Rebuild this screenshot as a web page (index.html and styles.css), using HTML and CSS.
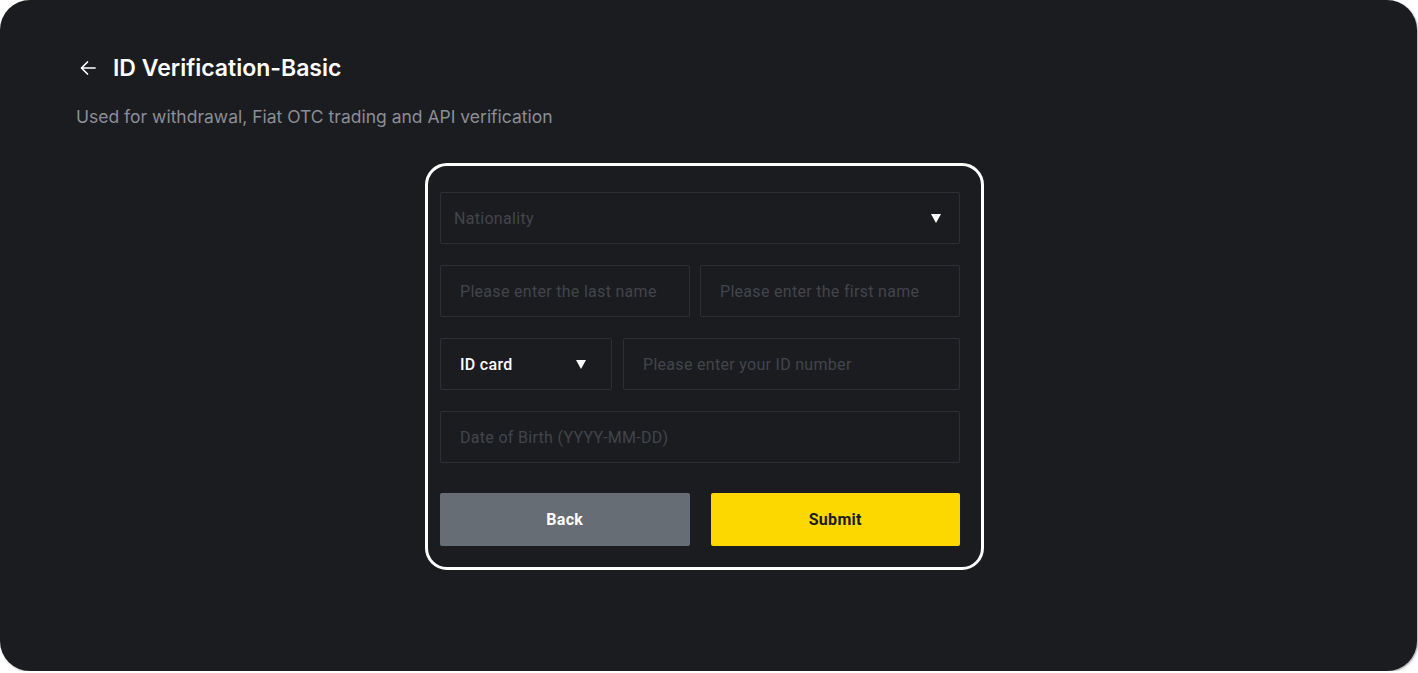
FILE: index.html
```html
<!DOCTYPE html>
<html>
<head>
    <title>ID Verification-Basic</title>
    <meta name="viewport" content="width=device-width, initial-scale=1.0">
    <link rel="stylesheet" href="styles.css">
</head>
<body>
    <div class="panel">
        <div class="title-row">
            <svg class="back-arrow" width="20" height="20" viewBox="0 0 20 20">
                <path d="M17 10H3.5M9.5 4L3.5 10l6 6" fill="none" stroke="#fff" stroke-width="1.7" stroke-linecap="round" stroke-linejoin="round"/>
            </svg>
            <h1>ID Verification-Basic</h1>
        </div>
        <p class="subtitle">Used for withdrawal, Fiat OTC trading and API verification</p>

        <form class="card">
            <div class="field select nationality">
                <span class="placeholder">Nationality</span>
                <span class="caret"></span>
            </div>

            <div class="row">
                <div class="field last-name"><span class="placeholder">Please enter the last name</span></div>
                <div class="field"><span class="placeholder">Please enter the first name</span></div>
            </div>

            <div class="row id-row">
                <div class="field select id-type">
                    <span class="value">ID card</span>
                    <span class="caret"></span>
                </div>
                <div class="field"><span class="placeholder">Please enter your ID number</span></div>
            </div>

            <div class="field"><span class="placeholder">Date of Birth (YYYY-MM-DD)</span></div>

            <div class="buttons">
                <button type="button" class="btn back">Back</button>
                <button type="button" class="btn submit">Submit</button>
            </div>
        </form>
    </div>
</body>
</html>
```

FILE: styles.css
```css
body {
    margin: 0;
    background-color: #ffffff;
    font-family: Inter, "Liberation Sans", sans-serif;
}

.panel {
    width: 1417px;
    height: 671px;
    box-sizing: border-box;
    padding: 54px 76px 0 76px;
    background-color: #1b1c20;
    border-radius: 30px;
    box-shadow: 1px 1px 2px rgba(0,0,0,0.35);
}

.title-row {
    display: flex;
    align-items: center;
    height: 28px;
}

.back-arrow {
    margin-left: 2px;
    margin-right: 15px;
}

h1 {
    margin: 0;
    font-size: 23px;
    font-weight: 600;
    color: #ffffff;
}

.subtitle {
    margin: 23px 0 0 0;
    font-size: 17.5px;
    line-height: 24px;
    color: #8b8e95;
}

.card {
    width: 520px;
    margin: 34px 0 0 349px;
    padding: 26px 21px 21px 12px;
    border: 3px solid #ffffff;
    border-radius: 22px;
    display: flex;
    flex-direction: column;
    gap: 21px;
}

.row {
    display: flex;
    gap: 10px;
}

.row .field {
    flex: 1;
}

.row .last-name {
    flex: 0 0 250px;
}

.id-row {
    gap: 11px;
}

.id-row .id-type {
    flex: 0 0 172px;
}

.field {
    height: 52px;
    box-sizing: border-box;
    border: 1px solid #2d2f35;
    border-radius: 2px;
    padding: 0 19px;
    display: flex;
    align-items: center;
    font-family: Roboto, "Liberation Sans", sans-serif;
    font-size: 16px;
    letter-spacing: 0.3px;
}

.nationality {
    padding-left: 13px;
}

.select {
    justify-content: space-between;
    padding-right: 18px;
}

.id-type {
    padding-right: 25px;
}

.placeholder {
    color: #42454b;
}

.value {
    color: #ffffff;
    font-weight: 500;
}

.caret {
    width: 0;
    height: 0;
    border-left: 5px solid transparent;
    border-right: 5px solid transparent;
    border-top: 9px solid #ffffff;
}

.buttons {
    display: flex;
    gap: 21px;
    margin-top: 9px;
}

.btn {
    flex: 1;
    height: 53px;
    border: none;
    border-radius: 2px;
    font-family: Roboto, "Liberation Sans", sans-serif;
    font-size: 16px;
    font-weight: 700;
    letter-spacing: 0.3px;
    cursor: pointer;
}

.back {
    background-color: #676d75;
    color: #ffffff;
}

.submit {
    background-color: #fcd800;
    color: #1b1c20;
}
```
